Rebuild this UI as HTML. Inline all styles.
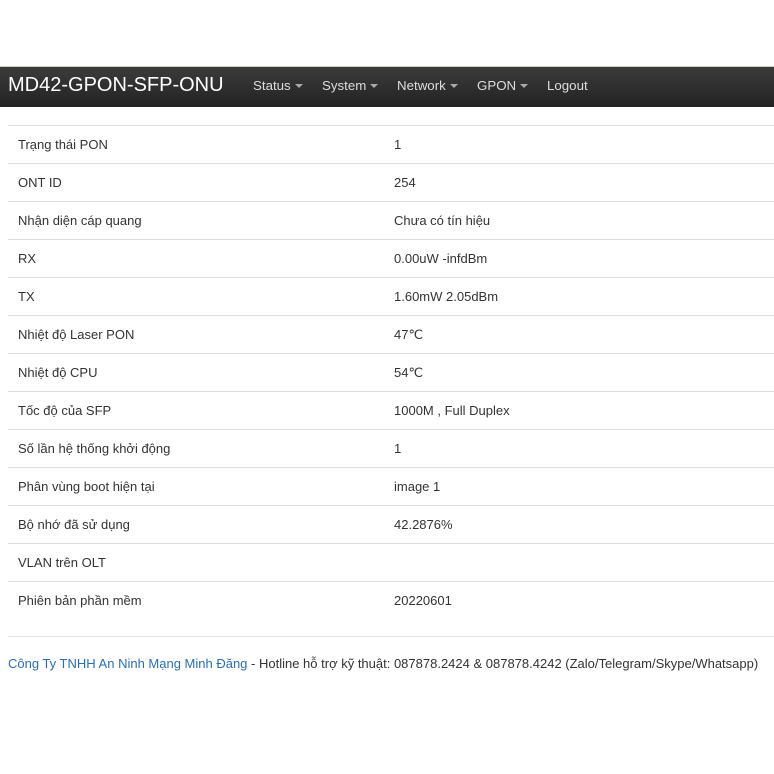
<!DOCTYPE html>
<html><head><meta charset="utf-8"><style>
body{margin:0;background:#fff;font-family:"Liberation Sans",Arial,sans-serif;font-size:13px;color:#333;width:774px;height:774px;overflow:hidden;position:relative}
.nav{position:absolute;top:66px;left:0;width:774px;height:41px;background:linear-gradient(#3c3c3c,#222);border-top:1px solid #c8d0c4;box-sizing:border-box}
.brand{position:absolute;left:8px;top:7px;font-size:20px;color:#fff}
.nav span.i{position:absolute;top:11px;color:#ddd;font-size:13.3px}
.c{display:inline-block;width:0;height:0;border-left:4px solid transparent;border-right:4px solid transparent;border-top:4px solid #aaa;vertical-align:middle;margin-left:4px}
table{position:absolute;top:125px;left:8px;width:766px;border-collapse:collapse}
td{height:37px;border-top:1px solid #ddd;padding:0 0 0 10px;vertical-align:middle}
td.l{width:376px;padding-left:10px;box-sizing:border-box}
hr{position:absolute;top:636px;left:8px;width:766px;margin:0;border:0;border-top:1px solid #e4e4e4}
.f{position:absolute;top:656px;left:8px;white-space:nowrap;font-size:13px}
.f a{color:#2a6ebb;text-decoration:none}
</style></head><body>
<div class="nav"><div class="brand">MD42-GPON-SFP-ONU</div>
<span class="i" style="left:253px">Status<i class="c"></i></span>
<span class="i" style="left:322px">System<i class="c"></i></span>
<span class="i" style="left:397px">Network<i class="c"></i></span>
<span class="i" style="left:477px">GPON<i class="c"></i></span>
<span class="i" style="left:547px">Logout</span></div>
<table>
<tr><td class="l">Trạng thái PON</td><td>1</td></tr>
<tr><td class="l">ONT ID</td><td>254</td></tr>
<tr><td class="l">Nhận diện cáp quang</td><td>Chưa có tín hiệu</td></tr>
<tr><td class="l">RX</td><td>0.00uW -infdBm</td></tr>
<tr><td class="l">TX</td><td>1.60mW 2.05dBm</td></tr>
<tr><td class="l">Nhiệt độ Laser PON</td><td>47℃</td></tr>
<tr><td class="l">Nhiệt độ CPU</td><td>54℃</td></tr>
<tr><td class="l">Tốc độ của SFP</td><td>1000M , Full Duplex</td></tr>
<tr><td class="l">Số lần hệ thống khởi động</td><td>1</td></tr>
<tr><td class="l">Phân vùng boot hiện tại</td><td>image 1</td></tr>
<tr><td class="l">Bộ nhớ đã sử dụng</td><td>42.2876%</td></tr>
<tr><td class="l">VLAN trên OLT</td><td></td></tr>
<tr><td class="l">Phiên bản phần mềm</td><td>20220601</td></tr>
</table>
<hr>
<div class="f"><a>Công Ty TNHH An Ninh Mạng Minh Đăng</a> - Hotline hỗ trợ kỹ thuật: 087878.2424 &amp; 087878.4242 (Zalo/Telegram/Skype/Whatsapp)</div>
</body></html>
